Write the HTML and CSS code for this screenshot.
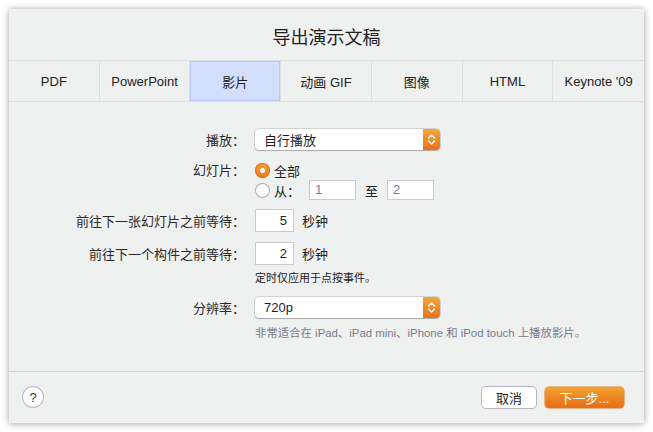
FILE: index.html
```html
<!DOCTYPE html>
<html lang="zh-CN">
<head>
<meta charset="utf-8">
<title>导出演示文稿</title>
<link rel="stylesheet" href="styles.css">
</head>
<body>
<div class="window">
  <div class="title">导出演示文稿</div>
  <div class="tabs">
    <div class="tab">PDF</div>
    <div class="tab">PowerPoint</div>
    <div class="tab active">影片</div>
    <div class="tab">动画 GIF</div>
    <div class="tab">图像</div>
    <div class="tab">HTML</div>
    <div class="tab last">Keynote '09</div>
  </div>
  <div class="content">
    <div class="row r-play">
      <div class="label">播放：</div>
      <div class="select">
        <span class="select-text">自行播放</span>
        <span class="select-arrow"><svg width="9" height="13" viewBox="0 0 9 13"><path d="M1.5 5 L4.5 2 L7.5 5 M1.5 8 L4.5 11 L7.5 8" fill="none" stroke="#fff" stroke-width="1.5" stroke-linecap="round" stroke-linejoin="round"/></svg></span>
      </div>
    </div>
    <div class="row r-slides">
      <div class="label">幻灯片：</div>
      <div class="radios">
        <div class="radio-row r1">
          <span class="radio on"></span><span class="radio-text">全部</span>
        </div>
        <div class="radio-row r2">
          <span class="radio"></span><span class="radio-text from">从：</span>
          <span class="num-box dim">1</span>
          <span class="to">至</span>
          <span class="num-box dim">2</span>
        </div>
      </div>
    </div>
    <div class="row r-wait1">
      <div class="label">前往下一张幻灯片之前等待：</div>
      <span class="sec-box">5</span><span class="unit">秒钟</span>
    </div>
    <div class="row r-wait2">
      <div class="label">前往下一个构件之前等待：</div>
      <span class="sec-box">2</span><span class="unit">秒钟</span>
    </div>
    <div class="note">定时仅应用于点按事件。</div>
    <div class="row r-res">
      <div class="label">分辨率：</div>
      <div class="select">
        <span class="select-text">720p</span>
        <span class="select-arrow"><svg width="9" height="13" viewBox="0 0 9 13"><path d="M1.5 5 L4.5 2 L7.5 5 M1.5 8 L4.5 11 L7.5 8" fill="none" stroke="#fff" stroke-width="1.5" stroke-linecap="round" stroke-linejoin="round"/></svg></span>
      </div>
    </div>
    <div class="hint">非常适合在 iPad、iPad mini、iPhone 和 iPod touch 上播放影片。</div>
  </div>
  <div class="footer">
    <div class="help">?</div>
    <div class="buttons">
      <div class="btn cancel">取消</div>
      <div class="btn next">下一步...</div>
    </div>
  </div>
</div>
</body>
</html>
```
FILE: styles.css
```css
* { box-sizing: border-box; }
html, body { margin: 0; padding: 0; background: #ffffff; }
body {
  padding: 9px;
  font-family: "Liberation Sans", "Noto Sans CJK SC", sans-serif;
  font-size: 13px;
  color: #262626;
}
.window {
  width: 635px;
  height: 414px;
  background: #eff0f0;
  box-shadow: 0 0 6px rgba(0,0,0,0.28), 0 2px 8px rgba(0,0,0,0.12);
  display: flex;
  flex-direction: column;
}
.title {
  height: 51px;
  display: flex;
  align-items: center;
  justify-content: center;
  font-size: 18px;
  color: #1f1f1f;
  padding-top: 3px;
}
.tabs {
  height: 42px;
  display: grid;
  grid-template-columns: repeat(7, 1fr);
  border-top: 1px solid #dcdee6;
  border-bottom: 1px solid #dcdee6;
}
.tab {
  display: flex;
  align-items: center;
  justify-content: center;
  border-right: 1px solid #dcdee6;
  color: #222;
}
.tab.last { border-right: none; }
.tab.active {
  background: #d1dffa;
  box-shadow: inset 0 0 0 1px #b8cbf5;
}
.content {
  padding-top: 27px;
  display: flex;
  flex-direction: column;
}
.row {
  display: flex;
  align-items: center;
}
.label {
  width: 236px;
  margin-right: 10px;
  text-align: right;
  flex-shrink: 0;
  color: #2a2a2a;
  white-space: nowrap;
}
.select {
  width: 185px;
  height: 21px;
  background: #fff;
  border-radius: 4px;
  box-shadow: 0 0 0 0.5px rgba(0,0,0,0.25), 0 1px 1px rgba(0,0,0,0.18);
  display: flex;
  align-items: center;
  overflow: hidden;
}
.select-text {
  flex: 1;
  padding-left: 9px;
  font-size: 13px;
  color: #1f1f1f;
}
.select-arrow {
  width: 17px;
  height: 21px;
  background: linear-gradient(#f4a63a, #e8701b);
  display: flex;
  align-items: center;
  justify-content: center;
}
.r-slides {
  margin-top: 11px;
  align-items: flex-start;
}
.r-slides .label { line-height: 19px; }
.radios { display: flex; flex-direction: column; }
.radio-row {
  display: flex;
  align-items: center;
}
.radio-row.r1 { height: 19px; }
.radio-row.r2 { height: 20px; }
.radio {
  width: 15px;
  height: 15px;
  border-radius: 50%;
  background: #fff;
  box-shadow: inset 0 0 0 1px #a9a9ae;
  margin-right: 4px;
  position: relative;
}
.radio.on {
  background: linear-gradient(#f3a237, #e97a1c);
  box-shadow: inset 0 0 0 1px #de7418;
}
.radio.on::after {
  content: "";
  position: absolute;
  left: 5px;
  top: 5px;
  width: 5px;
  height: 5px;
  border-radius: 50%;
  background: #fff;
}
.radio-text { color: #222; }
.radio-text.from { width: 35px; }
.num-box {
  width: 47px;
  height: 20px;
  background: #fff;
  border: 1px solid #c9c9cf;
  padding-left: 5px;
  line-height: 18px;
  color: #777c99;
}
.to {
  margin: 0 9px 0 9px;
  color: #222;
}
.r-wait1 { margin-top: 9px; height: 23px; }
.r-wait2 { margin-top: 10px; height: 23px; }
.sec-box {
  width: 39px;
  height: 23px;
  background: #fff;
  border: 1px solid #c9c9cf;
  text-align: right;
  padding-right: 6px;
  line-height: 21px;
  color: #1f1f1f;
}
.unit { margin-left: 8px; color: #222; }
.note {
  margin-top: 6px;
  padding-left: 246px;
  font-size: 11px;
  line-height: 14px;
  color: #222;
}
.r-res { margin-top: 12px; }
.hint {
  margin-top: 8px;
  padding-left: 246px;
  font-size: 11.4px;
  line-height: 14px;
  color: #777b8a;
}
.footer {
  margin-top: auto;
  height: 52px;
  border-top: 1px solid #cfd0d7;
  display: flex;
  align-items: flex-start;
  justify-content: space-between;
  padding: 15px 20px 0 14px;
}
.help {
  width: 20px;
  height: 20px;
  border-radius: 50%;
  background: #fff;
  box-shadow: 0 0 0 1px #b9bac6, 0 1px 1px rgba(0,0,0,0.12);
  display: flex;
  align-items: center;
  justify-content: center;
  font-size: 13px;
  color: #333;
}
.buttons { display: flex; gap: 9px; }
.btn {
  height: 21px;
  border-radius: 4px;
  display: flex;
  align-items: center;
  justify-content: center;
  font-size: 13px;
}
.cancel {
  width: 54px;
  background: #fff;
  box-shadow: 0 0 0 1px #b5b6c4, 0 1px 1px rgba(0,0,0,0.1);
  color: #1f1f1f;
}
.next {
  width: 79px;
  background: linear-gradient(#f2a232, #e86d17);
  box-shadow: 0 0 0 0.5px #e07a20;
  color: #fff;
}
```
